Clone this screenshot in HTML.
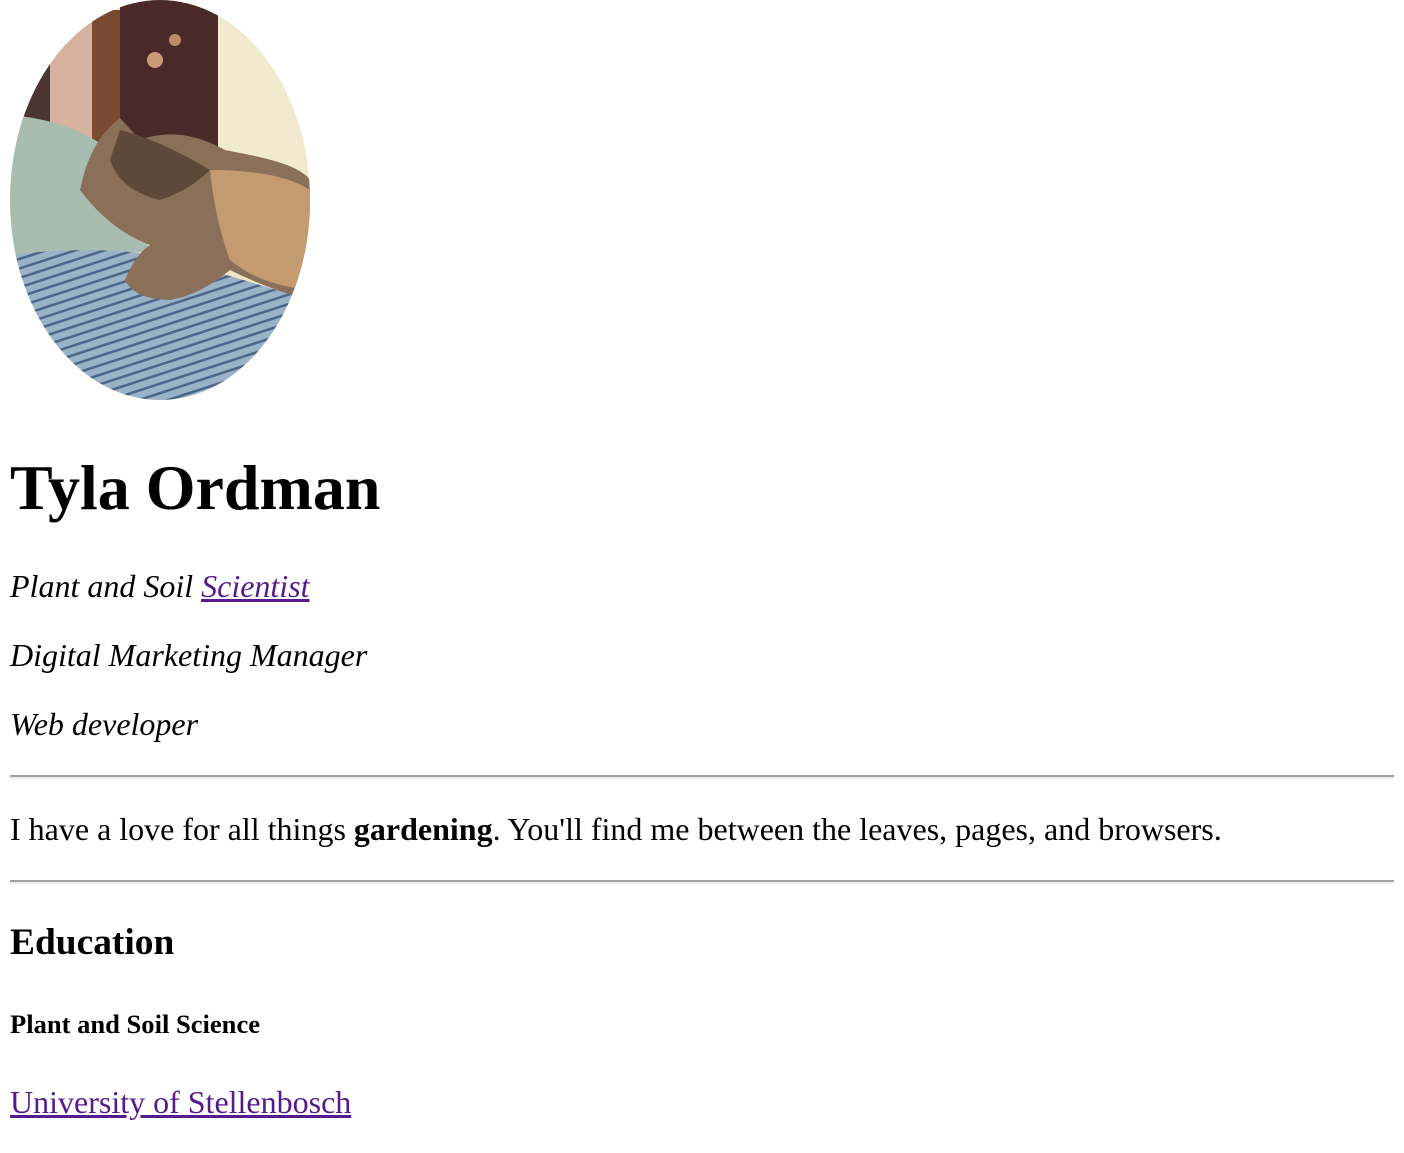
<!DOCTYPE html>
<html><head><meta charset="utf-8"><style>
html{zoom:2}
body{margin:0 5px;font-family:"Liberation Serif",serif;font-size:16px;color:#000;background:#fff}
h1{font-size:32px;margin:21.44px 0}
h3{font-size:18.72px;margin:18.72px 0}
h5{font-size:13.28px;margin:22.18px 0}
p{margin:16px 0}
a{color:#551A8B}
hr{margin:8px 0;border:0;border-top:1px solid #a0a0a0;border-bottom:1px solid #ececec;height:0}
svg{vertical-align:baseline}
</style></head><body>
<svg width="150" height="200" viewBox="0 0 300 400"><defs>
<clipPath id="c"><ellipse cx="150" cy="200" rx="150" ry="200"/></clipPath>
<pattern id="s" width="12" height="9" patternUnits="userSpaceOnUse" patternTransform="rotate(-18)"><rect width="12" height="9" fill="#9ab2c8"/><rect y="5" width="12" height="2.5" fill="#4a6688"/></pattern>
</defs>
<g clip-path="url(#c)">
<rect width="300" height="400" fill="#efe6c8"/>
<rect x="0" y="0" width="40" height="130" fill="#4a3530"/>
<rect x="40" y="0" width="45" height="150" fill="#d6b2a0"/>
<rect x="82" y="10" width="30" height="140" fill="#7a4a32"/>
<rect x="110" y="0" width="98" height="150" fill="#4a2a28"/>
<circle cx="145" cy="60" r="8" fill="#c89a7a"/><circle cx="165" cy="40" r="6" fill="#b8906a"/>
<rect x="208" y="0" width="92" height="180" fill="#f2ead0"/>
<path d="M0 115 Q60 120 100 150 L140 250 L0 280Z" fill="#a9bcb0"/>
<path d="M0 255 Q120 240 200 270 L300 300 L300 400 L0 400Z" fill="url(#s)"/>
<path d="M70 190 Q80 140 110 118 L130 140 Q170 125 215 150 L240 155 Q290 165 300 180 L300 300 Q260 290 220 270 Q190 295 160 300 Q125 300 115 280 Q125 255 140 245 Q100 230 70 190Z" fill="#8a7058"/>
<path d="M200 170 Q270 170 300 190 L300 290 Q250 285 220 260 Q205 220 200 170Z" fill="#c49a70"/>
<path d="M110 130 Q150 140 200 170 Q180 190 150 200 Q110 190 100 160Z" fill="#5e4838"/>
</g></svg>
<h1>Tyla Ordman</h1>
<p><em>Plant and Soil <a href="#">Scientist</a></em></p>
<p><em>Digital Marketing Manager</em></p>
<p><em>Web developer</em></p>
<hr>
<p>I have a love for all things <strong>gardening</strong>. You'll find me between the leaves, pages, and browsers.</p>
<hr>
<h3>Education</h3>
<h5>Plant and Soil Science</h5>
<p><a href="#">University of Stellenbosch</a></p>
</body></html>
